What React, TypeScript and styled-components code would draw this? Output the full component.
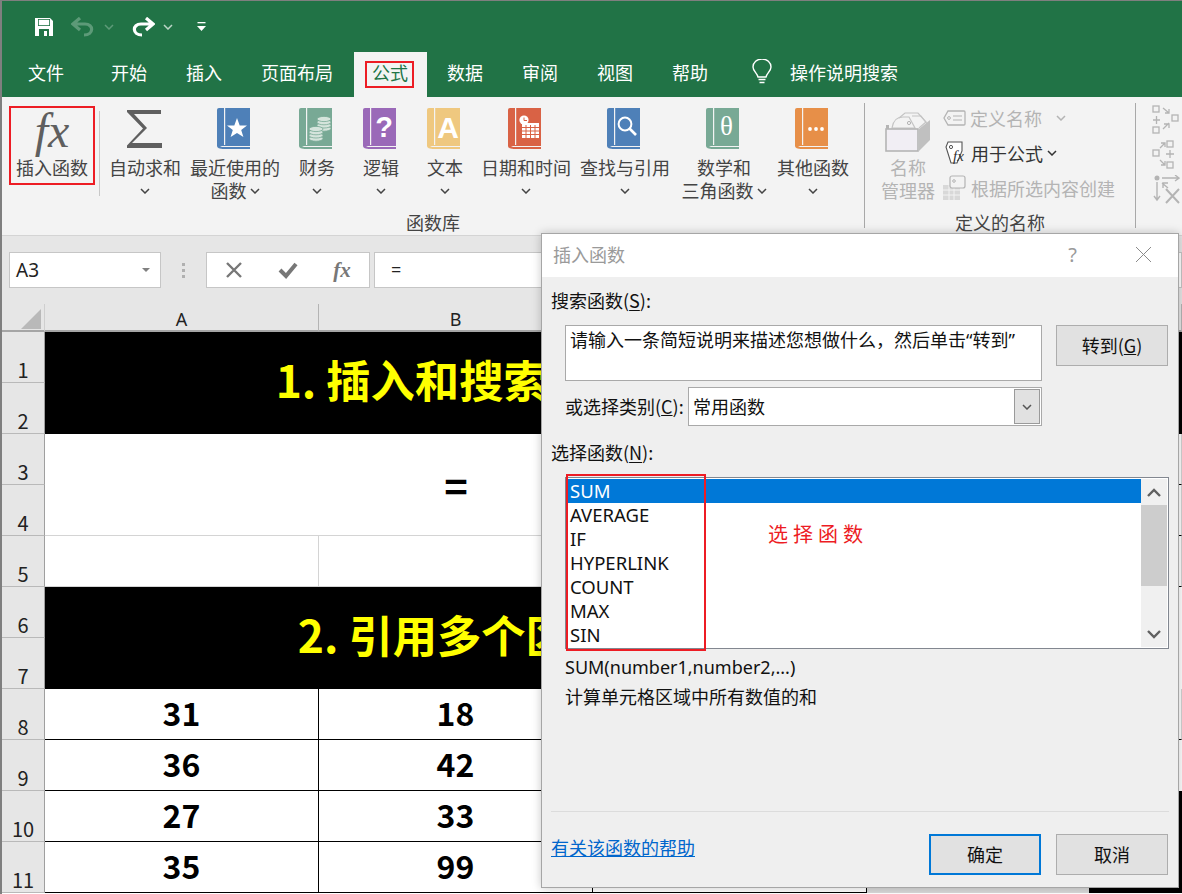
import React from 'react'
import styled, { createGlobalStyle } from 'styled-components'

const CJK = '"Noto Sans CJK SC", "Noto Sans", sans-serif'
const LATIN = '"Noto Sans", "Noto Sans CJK SC", sans-serif'

const GlobalStyle = createGlobalStyle`
  html, body {
    margin: 0;
    padding: 0;
    background: #fff;
  }
  * {
    box-sizing: border-box;
  }
`

const Window = styled.div`
  width: 1182px;
  height: 894px;
  position: relative;
  overflow: hidden;
  border-left: 2px solid #7f7f7f;
  border-top: 1px solid #7f7f7f;
  font-family: ${CJK};
  display: flex;
  flex-direction: column;
`

/* title bar + tabs */
const Head = styled.div`
  background: #217346;
  height: 96px;
  flex: none;
  display: flex;
  flex-direction: column;
`

const QuickBar = styled.div`
  height: 51px;
  display: flex;
  align-items: center;
  padding: 0 0 0 32px;
`

const QuickButton = styled.span<{ $gap: number }>`
  display: flex;
  margin-right: ${(p) => p.$gap}px;
`

const TabRow = styled.div`
  height: 45px;
  display: flex;
  align-items: stretch;
  padding-left: 6.5px;
  color: #fff;
  font-size: 18px;
`

const Tab = styled.div<{ $active?: boolean; $after?: number }>`
  padding: ${(p) => (p.$active ? '0 18.5px 5px' : '0 19.5px 5px')};
  display: flex;
  align-items: center;
  position: relative;
  margin: 0 ${(p) => (p.$active ? 1 : p.$after || 0)}px 0 ${(p) => (p.$active ? 1 : 0)}px;
  background: ${(p) => (p.$active ? '#f3f3f3' : 'transparent')};
  color: ${(p) => (p.$active ? '#217346' : '#fff')};
`

const TabMark = styled.div`
  position: absolute;
  left: 11px;
  top: 9px;
  width: 49px;
  height: 27px;
  border: 2px solid #ed1c24;
`

const TellMe = styled.div`
  display: flex;
  align-items: center;
  gap: 18px;
  margin-left: 24.5px;
  padding-bottom: 5px;
`

/* ribbon */
const Ribbon = styled.div`
  height: 139px;
  flex: none;
  background: #f3f3f3;
  border-bottom: 1px solid #d4d4d4;
  display: flex;
  padding-top: 6px;
  color: #444;
  font-size: 18px;
`

const Group = styled.div<{ $width: number; $last?: boolean }>`
  width: ${(p) => p.$width}px;
  flex: none;
  height: 125px;
  display: flex;
  flex-direction: column;
  border-right: ${(p) => (p.$last ? 'none' : '1px solid #a8a8a8')};
`

const GroupBody = styled.div`
  flex: 1;
  display: flex;
  min-height: 0;
`

const GroupLabel = styled.div`
  height: 24px;
  margin-bottom: -6px;
  line-height: 24px;
  text-align: center;
  font-size: 18px;
  color: #444;
`

const FxBox = styled.div`
  width: 86px;
  height: 79px;
  margin: 3px 0 0 7px;
  border: 2px solid #ed1c24;
  display: flex;
  flex-direction: column;
  align-items: center;
  flex: none;
`

const FxGlyph = styled.span`
  font-family: "Liberation Serif", serif;
  font-style: italic;
  font-size: 48px;
  line-height: 46px;
  height: 46px;
  color: #5f5f5f;
`

const FxLabel = styled.span`
  line-height: 24px;
  margin-top: 1px;
  white-space: nowrap;
`

const GroupRule = styled.div`
  width: 1px;
  height: 85px;
  margin: 8px 5px 0 4px;
  background: #c8c8c8;
  flex: none;
`

const RibbonButton = styled.div<{ $width: number }>`
  width: ${(p) => p.$width}px;
  flex: none;
  display: flex;
  flex-direction: column;
  align-items: center;
  padding-top: 5px;
`

const IconSlot = styled.div`
  height: 41px;
  margin-bottom: 7px;
  display: flex;
  align-items: center;
  justify-content: center;
`

const ButtonLine = styled.div`
  height: 23px;
  line-height: 23px;
  display: flex;
  align-items: center;
  gap: 3px;
  white-space: nowrap;
`

const NameManager = styled.div`
  width: 62px;
  margin-left: 12px;
  flex: none;
  display: flex;
  flex-direction: column;
  align-items: center;
  padding-top: 9px;
  color: #b4b4b4;
  line-height: 23px;
`

const NameIconSlot = styled.div`
  height: 42px;
  margin-bottom: 2px;
`

const NameCommands = styled.div`
  margin-left: 4px;
  flex: 1;
  padding-top: 2px;
  display: flex;
  flex-direction: column;
  gap: 10px;
`

const NameCommand = styled.div<{ $off?: boolean }>`
  height: 25px;
  display: flex;
  align-items: center;
  gap: 4px;
  white-space: nowrap;
  color: ${(p) => (p.$off ? '#b4b4b4' : '#333')};
`

const ChevronSpacer = styled.span`
  width: 6px;
`

const ShapeColumn = styled.div`
  margin-left: 16px;
  padding-top: 2px;
  display: flex;
  flex-direction: column;
  gap: 5px;
`

/* formula bar */
const FormulaBar = styled.div`
  height: 68px;
  flex: none;
  background: #e6e6e6;
  display: flex;
  align-items: flex-start;
  padding: 16px 0 0 7px;
  font-family: ${LATIN};
`

const NameBox = styled.div`
  width: 152px;
  height: 36px;
  background: #fff;
  border: 1px solid #c6c6c6;
  display: flex;
  align-items: center;
  justify-content: space-between;
  padding: 0 10px 0 6px;
  font-size: 19px;
  color: #222;
`

const Caret = styled.span`
  width: 0;
  height: 0;
  border-left: 4px solid transparent;
  border-right: 4px solid transparent;
  border-top: 4px solid #808080;
`

const Grip = styled.div`
  width: 45px;
  height: 36px;
  display: flex;
  flex-direction: column;
  align-items: center;
  justify-content: center;
  gap: 3px;
`

const GripDot = styled.span`
  width: 3px;
  height: 3px;
  background: #b0b0b0;
`

const FormulaTools = styled.div`
  width: 164px;
  height: 36px;
  background: #fff;
  border: 1px solid #c6c6c6;
  display: grid;
  grid-template-columns: repeat(3, 54px);
  align-items: center;
  justify-items: center;
`

const ToolFx = styled.span`
  font-family: "Liberation Serif", serif;
  font-style: italic;
  font-weight: 700;
  font-size: 21px;
  color: #777;
`

const FormulaInput = styled.div`
  flex: 1;
  margin-left: 4px;
  height: 36px;
  background: #fff;
  border: 1px solid #c6c6c6;
  padding-left: 16px;
  font-size: 18px;
  line-height: 33px;
  color: #222;
`

/* sheet */
const Sheet = styled.div`
  flex: 1;
  display: grid;
  grid-template-columns: 43px 274px 274px 274px 222px 1fr;
  grid-template-rows: 28px repeat(11, 51px);
  background: #fff;
`

const Corner = styled.div`
  background: #e6e6e6;
  border-bottom: 2px solid #a5a5a5;
  border-right: 1px solid #cfcfcf;
  display: flex;
  justify-content: flex-end;
  align-items: flex-end;
  padding: 0 3px 1px 0;
`

const ColumnHead = styled.div`
  background: #e6e6e6;
  border-bottom: 2px solid #a5a5a5;
  border-right: 1px solid #b4b4b4;
  font-size: 18px;
  font-family: ${LATIN};
  color: #222;
  text-align: center;
  line-height: 31px;
`

const RowHead = styled.div<{ $row: number }>`
  grid-column: 1;
  grid-row: ${(p) => p.$row};
  background: #e6e6e6;
  border-bottom: 1px solid #b9b9b9;
  border-right: 1px solid #9f9f9f;
  font-size: 20px;
  line-height: 24px;
  color: #222;
  text-align: center;
  display: flex;
  align-items: flex-end;
  justify-content: center;
`

const Banner = styled.div<{ $row: number }>`
  grid-column: 2 / 5;
  grid-row: ${(p) => p.$row} / span 2;
  background: #000;
  color: #ff0;
  font-size: 44.3px;
  font-weight: 700;
  display: flex;
  align-items: center;
  justify-content: center;
  padding-bottom: 8px;
  white-space: nowrap;
  overflow: hidden;
`

const EqualsCell = styled.div`
  grid-column: 2 / 5;
  grid-row: 4 / span 2;
  display: flex;
  align-items: center;
  justify-content: center;
  font-size: 40px;
  font-weight: 700;
  color: #000;
  border-bottom: 1px solid #d4d4d4;
`

const PlainCell = styled.div<{ $row: number; $col: number; $dark?: boolean }>`
  grid-row: ${(p) => p.$row};
  grid-column: ${(p) => p.$col};
  border-right: 1px solid #d4d4d4;
  border-bottom: 1px solid ${(p) => (p.$dark ? '#000' : '#d4d4d4')};
`

const ValueCell = styled.div<{ $row: number; $col: number }>`
  grid-row: ${(p) => p.$row};
  grid-column: ${(p) => p.$col};
  border-right: 1px solid #000;
  border-bottom: 1px solid #000;
  display: flex;
  align-items: center;
  justify-content: center;
  padding-bottom: 4px;
  font-size: 32px;
  font-weight: 700;
  color: #000;
`

const EdgeCell = styled.div<{ $row: number; $col: string; $fill: string; $span?: number }>`
  grid-column: ${(p) => p.$col};
  grid-row: ${(p) => p.$row} / span ${(p) => p.$span || 1};
  background: ${(p) => p.$fill};
`

/* dialog */
const Dialog = styled.div`
  position: absolute;
  left: 539px;
  top: 232px;
  width: 638px;
  height: 655px;
  background: #efefef;
  border: 1px solid #a6a6a6;
  box-shadow: 0 0 9px rgba(0, 0, 0, 0.22);
  font-size: 18px;
  color: #111;
  font-family: ${CJK};
`

const DialogTitle = styled.div`
  height: 43px;
  background: #fff;
  display: flex;
  align-items: center;
  padding: 0 26px 3px 11px;
  color: #9a9a9a;
`

const DialogName = styled.span`
  flex: 1;
`

const HelpMark = styled.span`
  font-size: 20px;
  font-family: ${LATIN};
  margin-right: 58px;
`

const DialogBody = styled.div`
  padding: 13px 9px 0;
`

const FieldLabel = styled.div<{ $top?: number }>`
  height: 24px;
  line-height: 21px;
  margin-top: ${(p) => p.$top || 0}px;
  white-space: nowrap;
  & u {
    text-underline-offset: 2px;
  }
`

const SearchRow = styled.div`
  margin: 11px 0 0 14px;
  display: flex;
  gap: 14px;
  align-items: flex-start;
`

const SearchBox = styled.div`
  width: 477px;
  height: 56px;
  background: #fff;
  border: 1px solid #a9a9a9;
  padding: 3px 4px;
  line-height: 22px;
  white-space: nowrap;
  font-family: ${LATIN};
`

const DialogButton = styled.div<{ $primary?: boolean }>`
  width: 112px;
  height: 41px;
  flex: none;
  background: #e1e1e1;
  border: ${(p) => (p.$primary ? '2px solid #0078d7' : '1px solid #adadad')};
  display: flex;
  align-items: center;
  justify-content: center;
  padding-bottom: 2px;
`

const CategoryRow = styled.div`
  margin: 6px 0 0 14px;
  display: flex;
  align-items: center;
`

const CategoryLabel = styled.div`
  width: 123px;
  white-space: nowrap;
  padding-bottom: 2px;
`

const CategorySelect = styled.div`
  width: 354px;
  height: 39px;
  line-height: 35px;
  background: #fff;
  border: 1px solid #a9a9a9;
  display: flex;
  align-items: flex-start;
  justify-content: space-between;
  padding: 1px 1px 1px 4px;
`

const SelectArrow = styled.div`
  width: 26px;
  height: 35px;
  background: #e1e1e1;
  border: 1px solid #9a9a9a;
  display: flex;
  align-items: center;
  justify-content: center;
`

const ListWrap = styled.div`
  margin: 11px 0 0 14px;
  width: 604px;
  height: 172px;
  position: relative;
  background: #fff;
  border: 1px solid #828790;
  padding: 1px;
  display: flex;
  font-family: ${LATIN};
  font-size: 18.5px;
`

const ListRows = styled.div`
  flex: 1;
`

const ListRow = styled.div<{ $selected?: boolean }>`
  height: 24px;
  line-height: 24px;
  padding-left: 3px;
  background: ${(p) => (p.$selected ? '#0078d7' : 'transparent')};
  color: ${(p) => (p.$selected ? '#fff' : '#111')};
`

const ScrollBar = styled.div`
  width: 26px;
  background: #f0f0f0;
  display: flex;
  flex-direction: column;
  align-items: center;
`

const ScrollArrow = styled.div`
  height: 26px;
  display: flex;
  align-items: center;
  justify-content: center;
`

const ScrollTrack = styled.div`
  flex: 1;
  width: 100%;
`

const ScrollThumb = styled.div`
  height: 81px;
  background: #cdcdcd;
`

const ListMark = styled.div`
  position: absolute;
  left: 0;
  top: -4px;
  width: 140px;
  height: 177px;
  border: 2px solid #ed1c24;
  pointer-events: none;
`

const ListNote = styled.div`
  position: absolute;
  left: 202px;
  top: 41px;
  color: #ed1c24;
  font-family: "Noto Sans CJK SC", sans-serif;
  font-size: 20px;
  letter-spacing: 5px;
  white-space: nowrap;
`

const Signature = styled.div`
  margin: 6px 0 0 14px;
  height: 24px;
  line-height: 24px;
  font-family: ${LATIN};
`

const Summary = styled.div`
  margin: 6px 0 0 14px;
  height: 24px;
  line-height: 22px;
`

const Separator = styled.div`
  margin-top: 102px;
  height: 1px;
  background: #dcdcdc;
`

const Footer = styled.div`
  margin-top: 22px;
  display: flex;
  align-items: flex-start;
  gap: 15px;
  padding-right: 1px;
`

const HelpLink = styled.a`
  flex: 1;
  color: #0066cc;
  text-decoration: underline;
  line-height: 24px;
  margin-top: 1px;
`

const Chevron = ({ color = '#444', size = 10 }: { color?: string; size?: number }) => (
  <svg width={size} height={size * 0.6} viewBox="0 0 10 6">
    <polyline points="1,1 5,5 9,1" fill="none" stroke={color} strokeWidth="1.5" />
  </svg>
)

// the books sit a little left of their labels, hence the 3px of empty width
const Book = ({ color, children }: { color: string; children?: React.ReactNode }) => (
  <svg width="36" height="41" viewBox="0 0 36 41">
    <path d="M2 0H33V41H7Q0 41 0 38V2Q0 0 2 0Z" fill={color} />
    <rect x="7" y="0" width="1.2" height="37" fill="#f3f3f3" />
    <path d="M3 38H33V39H5Z" fill="#f3f3f3" />
    <rect x="5" y="40" width="28" height="1" fill={color} />
    {children}
  </svg>
)

const SaveIcon = () => (
  <svg width="20" height="20" viewBox="0 0 20 20">
    <path d="M1 1H16L19 4V19H1Z" fill="#fff" />
    <rect x="4" y="2" width="12" height="7" fill="#217346" />
    <rect x="4.8" y="2.8" width="10.4" height="5.4" fill="#fff" />
    <rect x="5" y="12" width="10" height="7" fill="#217346" />
    <rect x="10" y="14" width="3" height="5" fill="#fff" />
  </svg>
)

const ArrowIcon = ({ flip, color }: { flip?: boolean; color: string }) => (
  <svg width="24" height="20" viewBox="0 0 24 20" style={flip ? { transform: 'scaleX(-1)' } : undefined}>
    <path d="M9 1 L2 7 L9 13 M3 7 H14 C23 7 23 18 13 18" fill="none" stroke={color} strokeWidth="3.2" />
  </svg>
)

const CustomizeIcon = () => (
  <svg width="9" height="10" viewBox="0 0 9 10">
    <rect x="0.5" y="0" width="8" height="1.3" fill="#fff" />
    <path d="M0 4H9L4.5 9Z" fill="#fff" />
  </svg>
)

const BulbIcon = () => (
  <svg width="20" height="26" viewBox="0 0 20 26">
    <path d="M6 18C5 14 1 12 1 8A9 8 0 0 1 19 8C19 12 15 14 14 18Z" fill="none" stroke="#fff" strokeWidth="1.4" />
    <path d="M6.5 20.5H13.5M7.5 23.5H12.5" stroke="#fff" strokeWidth="1.5" />
  </svg>
)

const SigmaIcon = () => (
  <svg width="36" height="38" viewBox="0 0 36 38">
    <path d="M0 0H34V4H7L20 18L5 33H35V38H0V35.5L16 18.5L0 2Z" fill="#5f5f5f" />
  </svg>
)

const CoinStack = ({ x, y, n }: { x: number; y: number; n: number }) => (
  <g>
    {Array.from({ length: n }).map((_, i) => (
      <ellipse key={i} cx={x} cy={y + (n - 1 - i) * 3.2} rx="7" ry="2.6" fill="#d5e4dc" stroke="#78a995" strokeWidth="0.8" />
    ))}
  </g>
)

const BookGlyph = styled.text`
  fill: #fff;
  text-anchor: middle;
`

const NameManagerIcon = () => (
  <svg width="46" height="42" viewBox="0 0 46 42">
    <path d="M7 16C8 9 12 5 18 5H24L30 16Z" fill="#f3f3f3" stroke="#c4c4c4" strokeWidth="1.2" />
    <path d="M14 6L20 1H33L41 10L34 16" fill="none" stroke="#c4c4c4" strokeWidth="1.2" />
    <path d="M27 4H36L43 13" fill="none" stroke="#c4c4c4" strokeWidth="1.2" />
    <circle cx="24" cy="11" r="1.6" fill="none" stroke="#b4b4b4" />
    <rect x="1" y="17" width="32" height="22" fill="#f1eef4" stroke="#b4b4b4" strokeWidth="1.6" />
    <path d="M34 17L45 8V28L34 39Z" fill="#c0c0c0" />
    <rect x="1" y="13" width="3" height="4" fill="#b4b4b4" />
  </svg>
)

const TagIcon = () => (
  <svg width="23" height="16" viewBox="0 0 23 16">
    <path d="M5 1H21Q22 1 22 2V14Q22 15 21 15H5L1 8Z" fill="none" stroke="#b4b4b4" strokeWidth="1.3" />
    <circle cx="6" cy="8" r="1.4" fill="none" stroke="#b4b4b4" />
    <path d="M10 6H19M10 10H19" stroke="#b4b4b4" strokeWidth="1.2" />
  </svg>
)

const TagFxIcon = () => (
  <svg width="24" height="24" viewBox="-2 0 24 24">
    <path d="M3 1H17V10L12 22H6L1 6Z" fill="#fff" stroke="#555" strokeWidth="1.1" />
    <circle cx="6" cy="6" r="1.6" fill="none" stroke="#555" />
    <text x="8" y="20" fontFamily="Liberation Serif, serif" fontStyle="italic" fontSize="15" fill="#333">fx</text>
  </svg>
)

const SelectionIcon = () => (
  <svg width="24" height="26" viewBox="0 0 24 26">
    <rect x="0" y="10" width="17" height="15" fill="#d8d8d8" />
    <path d="M0 15H17M0 20H17M6 10V25M11 10V25" stroke="#f3f3f3" strokeWidth="1" />
    <rect x="7" y="1" width="15" height="12" rx="2" fill="#f3f3f3" stroke="#b4b4b4" strokeWidth="1.2" />
    <circle cx="11" cy="6" r="1.3" fill="none" stroke="#b4b4b4" />
  </svg>
)

const TraceIcon = ({ kind }: { kind: number }) => (
  <svg width="28" height="30" viewBox="0 0 28 30">
    {kind === 0 && (
      <g fill="none" stroke="#b4b4b4" strokeWidth="1.3">
        <rect x="1" y="1" width="6" height="6" />
        <rect x="20" y="10" width="6" height="6" />
        <rect x="1" y="22" width="6" height="6" />
        <path d="M1 15H8M4.5 11V19M11 3L17 8M17 4V8H13M17 18L11 24M12 19H17V23" />
      </g>
    )}
    {kind === 1 && (
      <g fill="none" stroke="#b4b4b4" strokeWidth="1.3">
        <rect x="1" y="10" width="6" height="6" />
        <rect x="15" y="1" width="6" height="6" />
        <rect x="15" y="22" width="6" height="6" />
        <path d="M14 14H22M18 10V18M8 8L13 3M9 3H13V7M8 20L13 25M13 21V25H9" />
      </g>
    )}
    {kind === 2 && (
      <g fill="none" stroke="#b4b4b4" strokeWidth="1.4">
        <circle cx="5" cy="3" r="1.8" fill="#b4b4b4" />
        <path d="M5 7V24M2 21L5 25L8 21M10 3H26M23 0L27 3L23 6M10 8L16 13M11 13V8H16" />
        <path d="M14 14L27 28M27 14L14 28" strokeWidth="2" />
      </g>
    )}
  </svg>
)

const ribbonButtons: { width: number; icon: React.ReactNode; lines: [string, string?]; arrowInline?: boolean }[] = [
  { width: 80, icon: <SigmaIcon />, lines: ['自动求和'] },
  {
    width: 100,
    icon: (
      <Book color="#4e80b8">
        <polygon points="20,10 22.7,17.5 30,17.5 24.2,22 26.4,29 20,25 13.6,29 15.8,22 10,17.5 17.3,17.5" fill="#fff" />
      </Book>
    ),
    lines: ['最近使用的', '函数'],
    arrowInline: true,
  },
  {
    width: 64,
    icon: (
      <Book color="#78a995">
        <CoinStack x={25} y={11} n={4} />
        <CoinStack x={17} y={21} n={4} />
      </Book>
    ),
    lines: ['财务'],
  },
  {
    width: 64,
    icon: (
      <Book color="#9a69b8">
        <BookGlyph x="21" y="29" fontSize="29" fontWeight="700" fontFamily="Liberation Sans, sans-serif">?</BookGlyph>
      </Book>
    ),
    lines: ['逻辑'],
  },
  {
    width: 64,
    icon: (
      <Book color="#efc87f">
        <BookGlyph x="21" y="30" fontSize="30" fontWeight="700" fontFamily="Liberation Sans, sans-serif">A</BookGlyph>
      </Book>
    ),
    lines: ['文本'],
  },
  {
    width: 98,
    icon: (
      <Book color="#d96245">
        <rect x="14" y="15" width="17" height="15" fill="#fff" />
        <path d="M14 19.5H31M14 23H31M14 26.5H31M18 17V30M22.5 17V30M27 17V30" stroke="#d96245" strokeWidth="1" />
        <circle cx="16" cy="12" r="4.6" fill="#fff" />
        <path d="M16 9.5V12.5H19" fill="none" stroke="#d96245" strokeWidth="1" />
      </Book>
    ),
    lines: ['日期和时间'],
  },
  {
    width: 100,
    icon: (
      <Book color="#4e80b8">
        <circle cx="18" cy="16" r="6.4" fill="none" stroke="#fff" strokeWidth="2" />
        <path d="M22.5 20.5L29 27" stroke="#fff" strokeWidth="2.6" />
      </Book>
    ),
    lines: ['查找与引用'],
  },
  {
    width: 98,
    icon: (
      <Book color="#78a995">
        <BookGlyph x="20.5" y="27" fontSize="27" fontFamily="Liberation Serif, serif">θ</BookGlyph>
      </Book>
    ),
    lines: ['数学和', '三角函数'],
    arrowInline: true,
  },
  {
    width: 80,
    icon: (
      <Book color="#e78f48">
        <circle cx="15" cy="21" r="1.9" fill="#fff" />
        <circle cx="21" cy="21" r="1.9" fill="#fff" />
        <circle cx="27" cy="21" r="1.9" fill="#fff" />
      </Book>
    ),
    lines: ['其他函数'],
  },
]

const tabs = ['开始', '插入', '页面布局']
const laterTabs = ['数据', '审阅', '视图', '帮助']
const functions = ['SUM', 'AVERAGE', 'IF', 'HYPERLINK', 'COUNT', 'MAX', 'SIN']
const values = [
  ['31', '18'],
  ['36', '42'],
  ['27', '33'],
  ['35', '99'],
]

const TitleArea = () => (
  <Head>
    <QuickBar>
      <QuickButton $gap={17}><SaveIcon /></QuickButton>
      <QuickButton $gap={9}><ArrowIcon color="#5d9a78" /></QuickButton>
      <QuickButton $gap={17}><Chevron color="#5d9a78" /></QuickButton>
      <QuickButton $gap={8}><ArrowIcon flip color="#fff" /></QuickButton>
      <QuickButton $gap={24}><Chevron color="#bcd5c7" /></QuickButton>
      <QuickButton $gap={0}><CustomizeIcon /></QuickButton>
    </QuickBar>
    <TabRow>
      <Tab $after={8}>文件</Tab>
      {tabs.map((t) => <Tab key={t}>{t}</Tab>)}
      <Tab $active>公式<TabMark /></Tab>
      {laterTabs.map((t) => <Tab key={t}>{t}</Tab>)}
      <TellMe><BulbIcon />操作说明搜索</TellMe>
    </TabRow>
  </Head>
)

const RibbonArea = () => (
  <Ribbon>
    <Group $width={863}>
      <GroupBody>
        <FxBox>
          <FxGlyph>fx</FxGlyph>
          <FxLabel>插入函数</FxLabel>
        </FxBox>
        <GroupRule />
        {ribbonButtons.map((b) => (
          <RibbonButton key={b.lines[0]} $width={b.width}>
            <IconSlot>{b.icon}</IconSlot>
            <ButtonLine>{b.lines[0]}</ButtonLine>
            <ButtonLine>
              {b.lines[1]}
              {(b.arrowInline || !b.lines[1]) && <Chevron />}
            </ButtonLine>
          </RibbonButton>
        ))}
      </GroupBody>
      <GroupLabel>函数库</GroupLabel>
    </Group>
    <Group $width={271}>
      <GroupBody>
        <NameManager>
          <NameIconSlot><NameManagerIcon /></NameIconSlot>
          <div>名称</div>
          <div>管理器</div>
        </NameManager>
        <NameCommands>
          <NameCommand $off>
            <TagIcon />定义名称
            <ChevronSpacer />
            <Chevron color="#b4b4b4" />
          </NameCommand>
          <NameCommand>
            <TagFxIcon />用于公式
            <Chevron color="#333" />
          </NameCommand>
          <NameCommand $off>
            <SelectionIcon />根据所选内容创建
          </NameCommand>
        </NameCommands>
      </GroupBody>
      <GroupLabel>定义的名称</GroupLabel>
    </Group>
    <Group $width={46} $last>
      <ShapeColumn>
        <TraceIcon kind={0} />
        <TraceIcon kind={1} />
        <TraceIcon kind={2} />
      </ShapeColumn>
    </Group>
  </Ribbon>
)

const FormulaArea = () => (
  <FormulaBar>
    <NameBox>A3<Caret /></NameBox>
    <Grip><GripDot /><GripDot /><GripDot /></Grip>
    <FormulaTools>
      <svg width="18" height="18" viewBox="0 0 18 18">
        <path d="M2 2L16 16M16 2L2 16" stroke="#777" strokeWidth="2.4" />
      </svg>
      <svg width="20" height="18" viewBox="0 0 20 18">
        <path d="M2 9L8 15L18 3" fill="none" stroke="#777" strokeWidth="4" />
      </svg>
      <ToolFx>fx</ToolFx>
    </FormulaTools>
    <FormulaInput>=</FormulaInput>
  </FormulaBar>
)

const SheetArea = () => (
  <Sheet>
    <Corner>
      <svg width="20" height="20" viewBox="0 0 20 20"><path d="M20 0V20H0Z" fill="#b9b9b9" /></svg>
    </Corner>
    <ColumnHead>A</ColumnHead>
    <ColumnHead>B</ColumnHead>
    <ColumnHead>C</ColumnHead>
    <ColumnHead>D</ColumnHead>
    <ColumnHead>E</ColumnHead>

    {Array.from({ length: 11 }).map((_, i) => (
      <RowHead key={i} $row={i + 2}>{i + 1}</RowHead>
    ))}

    <Banner $row={2}>1. 插入和搜索函数</Banner>
    <EdgeCell $row={2} $span={2} $col="5 / 7" $fill="#000" />
    <EqualsCell>=</EqualsCell>
    <PlainCell $row={4} $col={6} $dark />
    <PlainCell $row={5} $col={6} $dark />
    <PlainCell $row={6} $col={2} />
    <PlainCell $row={6} $col={3} />
    <PlainCell $row={6} $col={4} />
    <PlainCell $row={6} $col={6} $dark />
    <Banner $row={7}>2. 引用多个区域</Banner>

    {values.map((row, r) =>
      row.map((v, c) => (
        <ValueCell key={v + c} $row={r + 9} $col={c + 2}>{v}</ValueCell>
      )),
    )}
    {values.map((_, r) => (
      <ValueCell key={r} $row={r + 9} $col={4} />
    ))}
    <PlainCell $row={9} $col={6} $dark />
    <EdgeCell $row={12} $col="5" $fill="#d9d9d9" />
    <EdgeCell $row={11} $span={2} $col="6" $fill="#000" />
  </Sheet>
)

const InsertDialog = () => (
  <Dialog>
    <DialogTitle>
      <DialogName>插入函数</DialogName>
      <HelpMark>?</HelpMark>
      <svg width="17" height="17" viewBox="0 0 17 17">
        <path d="M1 1L16 16M16 1L1 16" stroke="#8a8a8a" strokeWidth="1" />
      </svg>
    </DialogTitle>
    <DialogBody>
      <FieldLabel>搜索函数(<u>S</u>):</FieldLabel>
      <SearchRow>
        <SearchBox>请输入一条简短说明来描述您想做什么，然后单击“转到”</SearchBox>
        <DialogButton>转到(<u>G</u>)</DialogButton>
      </SearchRow>
      <CategoryRow>
        <CategoryLabel>或选择类别(<u>C</u>):</CategoryLabel>
        <CategorySelect>
          常用函数
          <SelectArrow><Chevron color="#555" /></SelectArrow>
        </CategorySelect>
      </CategoryRow>
      <FieldLabel $top={16}>选择函数(<u>N</u>):</FieldLabel>
      <ListWrap>
        <ListRows>
          {functions.map((f, i) => (
            <ListRow key={f} $selected={i === 0}>{f}</ListRow>
          ))}
        </ListRows>
        <ScrollBar>
          <ScrollArrow>
            <svg width="14" height="9" viewBox="0 0 14 9"><polyline points="1,8 7,2 13,8" fill="none" stroke="#606060" strokeWidth="2.4" /></svg>
          </ScrollArrow>
          <ScrollTrack><ScrollThumb /></ScrollTrack>
          <ScrollArrow>
            <svg width="14" height="9" viewBox="0 0 14 9"><polyline points="1,1 7,7 13,1" fill="none" stroke="#606060" strokeWidth="2.4" /></svg>
          </ScrollArrow>
        </ScrollBar>
        <ListMark />
        <ListNote>选择函数</ListNote>
      </ListWrap>
      <Signature>SUM(number1,number2,...)</Signature>
      <Summary>计算单元格区域中所有数值的和</Summary>
      <Separator />
      <Footer>
        <HelpLink>有关该函数的帮助</HelpLink>
        <DialogButton $primary>确定</DialogButton>
        <DialogButton>取消</DialogButton>
      </Footer>
    </DialogBody>
  </Dialog>
)

export default function App() {
  return (
    <>
      <GlobalStyle />
      <Window>
        <TitleArea />
        <RibbonArea />
        <FormulaArea />
        <SheetArea />
        <InsertDialog />
      </Window>
    </>
  )
}
